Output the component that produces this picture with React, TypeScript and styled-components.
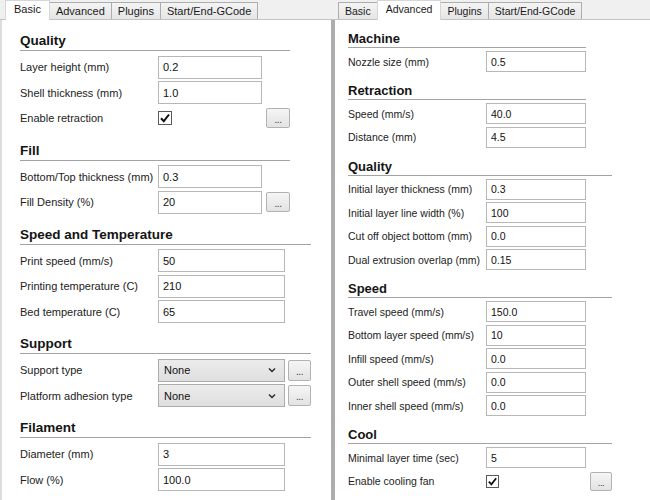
import React from "react";
import styled, { createGlobalStyle } from "styled-components";

const Global = createGlobalStyle`
  html, body { margin: 0; padding: 0; background: #ffffff; }
  body { font-family: "Liberation Sans", Arial, sans-serif; color: #1e1e1e; }
  #root { width: 650px; height: 500px; overflow: hidden; }
`;

type Metrics = {
  font: number;
  tabFont: number;
  headFont: number;
  rowH: number;
  rowGap: number;
  headPadTop: number;
  headLine: number;
  headAfter: number;
  btnH: number;
  box: number;
};

const LM: Metrics = { font: 11, tabFont: 11, headFont: 13.5, rowH: 23, rowGap: 2.5, headPadTop: 12, headLine: 18, headAfter: 2, btnH: 20, box: 14 };
const RM: Metrics = { font: 10.5, tabFont: 10.5, headFont: 13, rowH: 21, rowGap: 2.5, headPadTop: 11, headLine: 16, headAfter: 0.5, btnH: 19, box: 13 };

const LABEL_EDGE = 138;

const Screen = styled.div`
  display: flex;
  width: 650px;
  height: 500px;
`;

const Panel = styled.div<{ $w?: number }>`
  display: flex;
  flex-direction: column;
  ${(p) => (p.$w ? `width: ${p.$w}px; flex: none;` : `flex: 1; min-width: 0;`)}
`;

const TabBar = styled.div<{ $pad: number }>`
  display: flex;
  align-items: flex-end;
  height: 19px;
  padding-left: ${(p) => p.$pad}px;
  background: #f0f0f0;
  border-bottom: 1px solid #c3c3c3;
`;

const Tab = styled.div<{ $active?: boolean; $size: number }>`
  box-sizing: border-box;
  display: flex;
  align-items: center;
  font-size: ${(p) => p.$size}px;
  color: #1a1a1a;
  border: 1px solid ${(p) => (p.$active ? "#d6d6d6" : "#adadad")};
  border-bottom: none;
  margin-right: -1px;
  ${(p) =>
    p.$active
      ? `height: 20px; margin-bottom: -1px; padding: 0 8px 3px; background: #ffffff; position: relative; z-index: 1;`
      : `height: 17px; padding: 0 6px; background: linear-gradient(#f4f4f4, #e5e5e5);`}
`;

const Content = styled.div<{ $edge: number; $edgeColor: string; $pad: number }>`
  flex: 1;
  display: flex;
  flex-direction: column;
  align-items: flex-start;
  border-left: ${(p) => p.$edge}px solid ${(p) => p.$edgeColor};
  padding-left: ${(p) => p.$pad}px;
  background: #ffffff;
`;

const SectionGrid = styled.section<{ $cols: string; $gap: number; $rowGap: number }>`
  display: grid;
  grid-template-columns: ${(p) => p.$cols};
  column-gap: ${(p) => p.$gap}px;
  row-gap: ${(p) => p.$rowGap}px;
  align-items: center;
`;

const Heading = styled.h3<{ $m: Metrics }>`
  grid-column: 1 / -1;
  margin: 0 0 ${(p) => p.$m.headAfter}px;
  padding-top: ${(p) => p.$m.headPadTop}px;
  line-height: ${(p) => p.$m.headLine}px;
  font-size: ${(p) => p.$m.headFont}px;
  font-weight: bold;
  color: #141414;
  border-bottom: 1px solid #a3a3a3;
`;

const Label = styled.div<{ $m: Metrics }>`
  height: ${(p) => p.$m.rowH}px;
  display: flex;
  align-items: center;
  font-size: ${(p) => p.$m.font}px;
  color: #222;
  white-space: nowrap;
`;

const Input = styled.input<{ $m: Metrics }>`
  box-sizing: border-box;
  width: 100%;
  height: ${(p) => p.$m.rowH}px;
  margin: 0;
  border: 1px solid #b7b7b7;
  padding: 0 4px;
  font-family: inherit;
  font-size: ${(p) => p.$m.font}px;
  color: #111;
  background: #ffffff;
  outline: none;
`;

const SelectBox = styled.div<{ $m: Metrics }>`
  box-sizing: border-box;
  height: ${(p) => p.$m.rowH}px;
  display: flex;
  align-items: center;
  justify-content: space-between;
  padding: 0 8px 0 5px;
  border: 1px solid #acacac;
  background: linear-gradient(#ececec, #dfdfdf);
  font-size: ${(p) => p.$m.font}px;
  color: #111;
`;

const CheckCell = styled.div<{ $m: Metrics }>`
  height: ${(p) => p.$m.rowH}px;
  display: flex;
  align-items: center;
`;

const CheckBox = styled.span<{ $m: Metrics }>`
  box-sizing: border-box;
  width: ${(p) => p.$m.box}px;
  height: ${(p) => p.$m.box}px;
  border: 1px solid #5a5a5a;
  background: #ffffff;
  display: flex;
  align-items: center;
  justify-content: center;
`;

const DotsButton = styled.div<{ $h: number; $size: number }>`
  box-sizing: border-box;
  width: 100%;
  height: ${(p) => p.$h}px;
  border: 1px solid #b2b2b2;
  border-radius: 2px;
  background: linear-gradient(#f5f5f5, #e3e3e3);
  display: flex;
  align-items: center;
  justify-content: center;
  font-size: ${(p) => p.$size}px;
  color: #3a3a3a;
  padding-top: 2px;
  letter-spacing: -0.5px;
`;

type Row = {
  label: string;
  kind: "text" | "check" | "select";
  value?: string;
  button?: boolean;
  tallButton?: boolean;
};

type SectionDef = {
  title: string;
  inputW: number;
  btnW: number;
  gap: number;
  rows: Row[];
};

const Chevron = () => (
  <svg width="8" height="6" viewBox="0 0 8 6">
    <polyline points="1,1.5 4,4.5 7,1.5" fill="none" stroke="#2a2a2a" strokeWidth="1.5" />
  </svg>
);

const Tick = ({ s }: { s: number }) => (
  <svg width={s - 2} height={s - 2} viewBox="0 0 12 12">
    <polyline points="2,6.2 4.8,9.2 10,2.5" fill="none" stroke="#111" strokeWidth="2" />
  </svg>
);

const Section = ({ def, m }: { def: SectionDef; m: Metrics }) => {
  const hasBtn = def.btnW > 0;
  const cols = `${LABEL_EDGE - def.gap}px ${def.inputW}px${hasBtn ? ` ${def.btnW}px` : ""}`;
  return (
    <SectionGrid $cols={cols} $gap={def.gap} $rowGap={m.rowGap}>
      <Heading $m={m}>{def.title}</Heading>
      {def.rows.map((r) => (
        <React.Fragment key={r.label}>
          <Label $m={m}>{r.label}</Label>
          {r.kind === "text" && <Input $m={m} value={r.value} readOnly />}
          {r.kind === "select" && (
            <SelectBox $m={m}>
              <span>{r.value}</span>
              <Chevron />
            </SelectBox>
          )}
          {r.kind === "check" && (
            <CheckCell $m={m}>
              <CheckBox $m={m}>
                <Tick s={m.box} />
              </CheckBox>
            </CheckCell>
          )}
          {hasBtn &&
            (r.button ? (
              <DotsButton $h={r.tallButton ? m.rowH - 2 : m.btnH} $size={m.font - 1}>
                ...
              </DotsButton>
            ) : (
              <span />
            ))}
        </React.Fragment>
      ))}
    </SectionGrid>
  );
};

const leftSections: SectionDef[] = [
  {
    title: "Quality",
    inputW: 104,
    btnW: 24,
    gap: 4,
    rows: [
      { label: "Layer height (mm)", kind: "text", value: "0.2" },
      { label: "Shell thickness (mm)", kind: "text", value: "1.0" },
      { label: "Enable retraction", kind: "check", button: true },
    ],
  },
  {
    title: "Fill",
    inputW: 104,
    btnW: 24,
    gap: 4,
    rows: [
      { label: "Bottom/Top thickness (mm)", kind: "text", value: "0.3" },
      { label: "Fill Density (%)", kind: "text", value: "20", button: true },
    ],
  },
  {
    title: "Speed and Temperature",
    inputW: 127,
    btnW: 23,
    gap: 3,
    rows: [
      { label: "Print speed (mm/s)", kind: "text", value: "50" },
      { label: "Printing temperature (C)", kind: "text", value: "210" },
      { label: "Bed temperature (C)", kind: "text", value: "65" },
    ],
  },
  {
    title: "Support",
    inputW: 127,
    btnW: 23,
    gap: 3,
    rows: [
      { label: "Support type", kind: "select", value: "None", button: true, tallButton: true },
      { label: "Platform adhesion type", kind: "select", value: "None", button: true, tallButton: true },
    ],
  },
  {
    title: "Filament",
    inputW: 127,
    btnW: 23,
    gap: 3,
    rows: [
      { label: "Diameter (mm)", kind: "text", value: "3" },
      { label: "Flow (%)", kind: "text", value: "100.0" },
    ],
  },
];

const rightSections: SectionDef[] = [
  {
    title: "Machine",
    inputW: 100,
    btnW: 0,
    gap: 3,
    rows: [{ label: "Nozzle size (mm)", kind: "text", value: "0.5" }],
  },
  {
    title: "Retraction",
    inputW: 100,
    btnW: 0,
    gap: 3,
    rows: [
      { label: "Speed (mm/s)", kind: "text", value: "40.0" },
      { label: "Distance (mm)", kind: "text", value: "4.5" },
    ],
  },
  {
    title: "Quality",
    inputW: 100,
    btnW: 22,
    gap: 4,
    rows: [
      { label: "Initial layer thickness (mm)", kind: "text", value: "0.3" },
      { label: "Initial layer line width (%)", kind: "text", value: "100" },
      { label: "Cut off object bottom (mm)", kind: "text", value: "0.0" },
      { label: "Dual extrusion overlap (mm)", kind: "text", value: "0.15" },
    ],
  },
  {
    title: "Speed",
    inputW: 100,
    btnW: 22,
    gap: 4,
    rows: [
      { label: "Travel speed (mm/s)", kind: "text", value: "150.0" },
      { label: "Bottom layer speed (mm/s)", kind: "text", value: "10" },
      { label: "Infill speed (mm/s)", kind: "text", value: "0.0" },
      { label: "Outer shell speed (mm/s)", kind: "text", value: "0.0" },
      { label: "Inner shell speed (mm/s)", kind: "text", value: "0.0" },
    ],
  },
  {
    title: "Cool",
    inputW: 100,
    btnW: 22,
    gap: 4,
    rows: [
      { label: "Minimal layer time (sec)", kind: "text", value: "5" },
      { label: "Enable cooling fan", kind: "check", button: true },
    ],
  },
];

const tabs = ["Basic", "Advanced", "Plugins", "Start/End-GCode"];

export default function App() {
  return (
    <>
      <Global />
      <Screen>
        <Panel $w={331}>
          <TabBar $pad={5}>
            {tabs.map((t) => (
              <Tab key={t} $active={t === "Basic"} $size={LM.tabFont}>
                {t}
              </Tab>
            ))}
          </TabBar>
          <Content $edge={2} $edgeColor="#dcdcdc" $pad={18}>
            {leftSections.map((s) => (
              <Section key={s.title} def={s} m={LM} />
            ))}
          </Content>
        </Panel>
        <Panel>
          <TabBar $pad={7}>
            {tabs.map((t) => (
              <Tab key={t} $active={t === "Advanced"} $size={RM.tabFont}>
                {t}
              </Tab>
            ))}
          </TabBar>
          <Content $edge={4} $edgeColor="#adadad" $pad={13}>
            {rightSections.map((s) => (
              <Section key={s.title} def={s} m={RM} />
            ))}
          </Content>
        </Panel>
      </Screen>
    </>
  );
}
